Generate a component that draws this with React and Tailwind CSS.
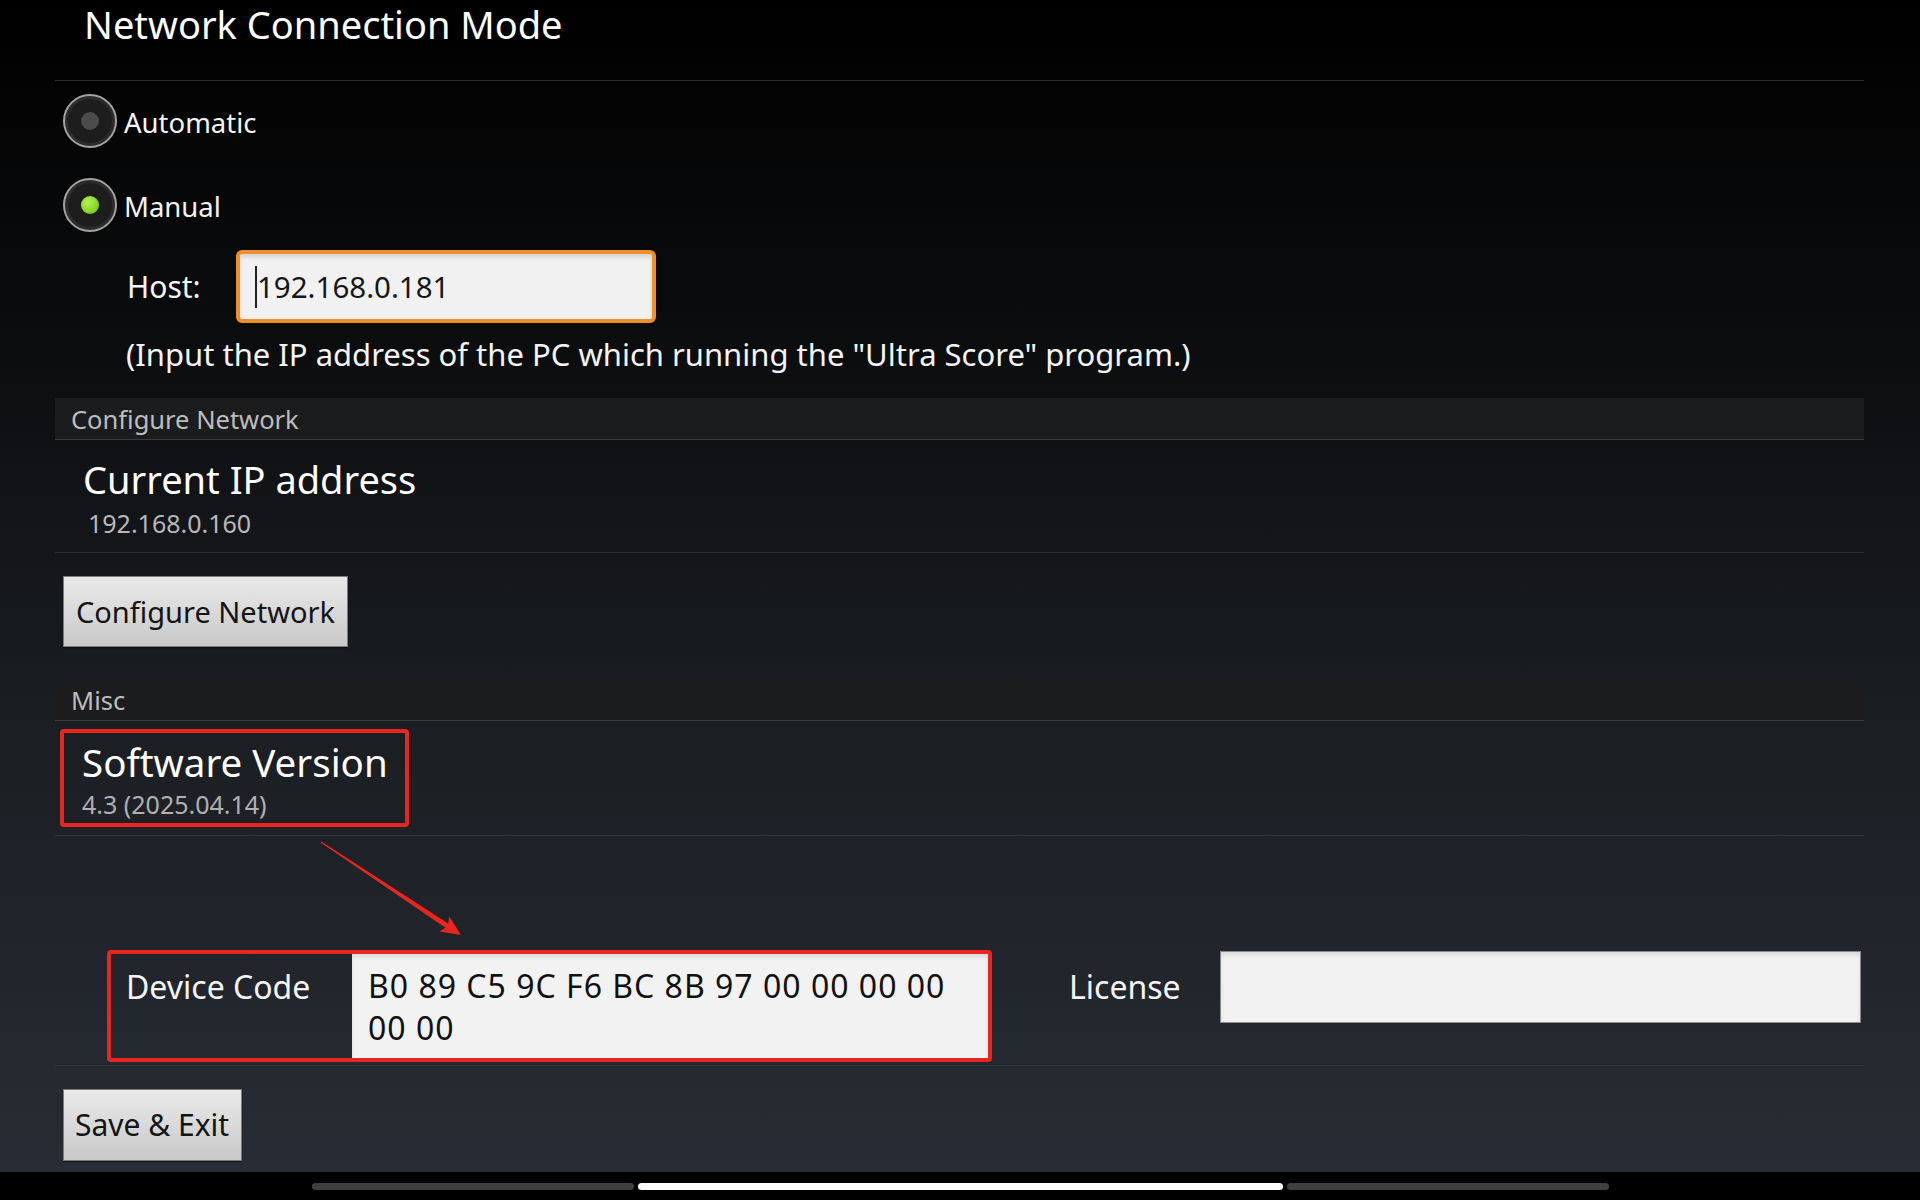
export default function App() {
  return (
    <div className="relative w-[1920px] h-[1200px] overflow-hidden bg-black font-['Noto_Sans',sans-serif] text-white">
      <div className="h-[1172px] bg-[linear-gradient(180deg,#000000_0%,#0c0d0f_30%,#1a1d21_60%,#282c34_100%)]">
        <div className="ml-[55px] w-[1809px]">
          {/* Title */}
          <div className="h-[81px] border-b border-[#2c2c2c] pl-[29px] text-[38px] leading-[48px] text-white">
            Network Connection Mode
          </div>

          {/* Radios */}
          <div className="flex flex-col gap-[4px]">
            <div className="h-[80px] flex items-center pl-[8px]">
              <span className="w-[54px] h-[54px] rounded-full border-2 border-[#a4a4a4] bg-[#1d1d1d] shadow-[inset_0_0_0_3px_#2c2c2c] flex items-center justify-center">
                <span className="w-[18px] h-[18px] rounded-full bg-[#4b4b4b]" />
              </span>
              <span className="ml-[7px] mt-[2px] text-[27.5px] leading-[29px] text-[#f4f4f4]">Automatic</span>
            </div>
            <div className="h-[80px] flex items-center pl-[8px]">
              <span className="w-[54px] h-[54px] rounded-full border-2 border-[#a4a4a4] bg-[#1d1d1d] shadow-[inset_0_0_0_3px_#2c2c2c] flex items-center justify-center">
                <span className="w-[18px] h-[18px] rounded-full bg-[radial-gradient(circle_at_40%_35%,#b4f05a_0%,#86d624_60%,#6cb818_100%)]" />
              </span>
              <span className="ml-[7px] mt-[2px] text-[27.5px] leading-[29px] text-[#f4f4f4]">Manual</span>
            </div>
          </div>

          {/* Host */}
          <div className="mt-[5px] h-[73px] flex items-center">
            <span className="ml-[72px] w-[109px] text-[30px] leading-[30px] text-[#f4f4f4]">Host:</span>
            <div className="w-[420px] h-[73px] rounded-[6px] border-[4px] border-[#ee8f2c] bg-[#f1f1f1] shadow-[inset_0_3px_4px_rgba(0,0,0,0.12)] flex items-center pl-[15px]">
              <span className="w-[2px] h-[42px] bg-[#222]" />
              <span className="text-[29.5px] leading-[30px] text-[#161616]">192.168.0.181</span>
            </div>
          </div>

          {/* Hint */}
          <div className="mt-[16px] ml-[71px] text-[31px] leading-[31px] text-[#f4f4f4]">
            (Input the IP address of the PC which running the "Ultra Score" program.)
          </div>

          {/* Configure Network header */}
          <div className="mt-[28px] h-[42px] bg-[#1b1c1d] border-b border-[#3b3b3b] flex items-center pl-[16px] text-[25.5px] leading-[26px] text-[#bdbdbd]">
            Configure Network
          </div>

          {/* Current IP */}
          <div className="pt-[20px] pb-[16px] border-b border-[#ffffff1a]">
            <div className="pl-[28px] text-[38px] leading-[38px] text-white">Current IP address</div>
            <div className="mt-[13px] pl-[33px] text-[25px] leading-[25px] text-[#b8b8b8]">192.168.0.160</div>
          </div>

          {/* Configure button */}
          <div className="mt-[23px] ml-[8px] w-[285px] h-[71px] border border-[#7c7c7c] bg-[linear-gradient(180deg,#e9e9e9_0%,#d6d6d6_60%,#c8c8c8_100%)] shadow-[0_1px_1px_rgba(0,0,0,0.5)] flex items-center pl-[12px] text-[29px] leading-[29px] text-[#141414]">
            Configure Network
          </div>

          {/* Misc header */}
          <div className="mt-[32px] h-[42px] bg-[#1b1c1d] border-b border-[#3b3b3b] flex items-center pl-[16px] text-[25.5px] leading-[26px] text-[#bdbdbd]">
            Misc
          </div>

          {/* Software version */}
          <div className="pt-[8px] pb-[8px] border-b border-[#ffffff14]">
            <div className="ml-[5px] w-[349px] h-[98px] rounded-[4px] border-[4px] border-[#e8251e] pl-[18px] pt-[10px]">
              <div className="text-[38.5px] leading-[38px] text-white">Software Version</div>
              <div className="mt-[11px] text-[25px] leading-[25px] text-[#b0b0b0]">4.3 (2025.04.14)</div>
            </div>
          </div>

          {/* Device code / License */}
          <div className="pt-[114px] pb-[3px] border-b border-[#ffffff12] flex items-start">
            <div className="ml-[52px] w-[885px] h-[112px] rounded-[4px] border-[4px] border-[#e8251e] flex">
              <div className="w-[241px] pl-[15px] pt-[17px] text-[32px] leading-[32px] text-[#f4f4f4]">Device Code</div>
              <div className="flex-1 bg-[#f2f2f2] shadow-[inset_0_3px_4px_rgba(0,0,0,0.1)] pl-[16px] pt-[11px] text-[32px] leading-[42px] tracking-[1px] text-[#111]">
                B0 89 C5 9C F6 BC 8B 97 00 00 00 00
                <br />
                00 00
              </div>
            </div>
            <div className="ml-[77px] w-[151px] pt-[21px] text-[32px] leading-[32px] text-[#f4f4f4]">License</div>
            <div className="mt-[1px] w-[641px] h-[72px] border border-[#8a8a8a] bg-[#f2f2f2] shadow-[inset_0_3px_4px_rgba(0,0,0,0.1)]" />
          </div>

          {/* Save & Exit */}
          <div className="mt-[23px] ml-[8px] w-[179px] h-[72px] border border-[#7c7c7c] bg-[linear-gradient(180deg,#e9e9e9_0%,#d6d6d6_60%,#c8c8c8_100%)] shadow-[0_1px_1px_rgba(0,0,0,0.5)] flex items-center pl-[11px] text-[30px] leading-[30px] text-[#141414]">
            Save &amp; Exit
          </div>
        </div>
      </div>

      {/* Bottom navigation bar */}
      <div className="h-[28px] bg-black flex justify-center gap-[4px] pt-[11px]">
        <span className="w-[322px] h-[7px] rounded-full bg-[#3f3f3f]" />
        <span className="w-[645px] h-[7px] rounded-full bg-white" />
        <span className="w-[322px] h-[7px] rounded-full bg-[#3f3f3f]" />
      </div>

      {/* Annotation arrow */}
      <svg className="absolute left-0 top-0 pointer-events-none" width="1920" height="1200" viewBox="0 0 1920 1200">
        <polygon
          fill="#e8251e"
          points="320.6,842.6 321.4,841.4 448.2,923.5 449.3,916.4 461,935 439.3,931.4 445.4,927.7"
        />
      </svg>
    </div>
  );
}
